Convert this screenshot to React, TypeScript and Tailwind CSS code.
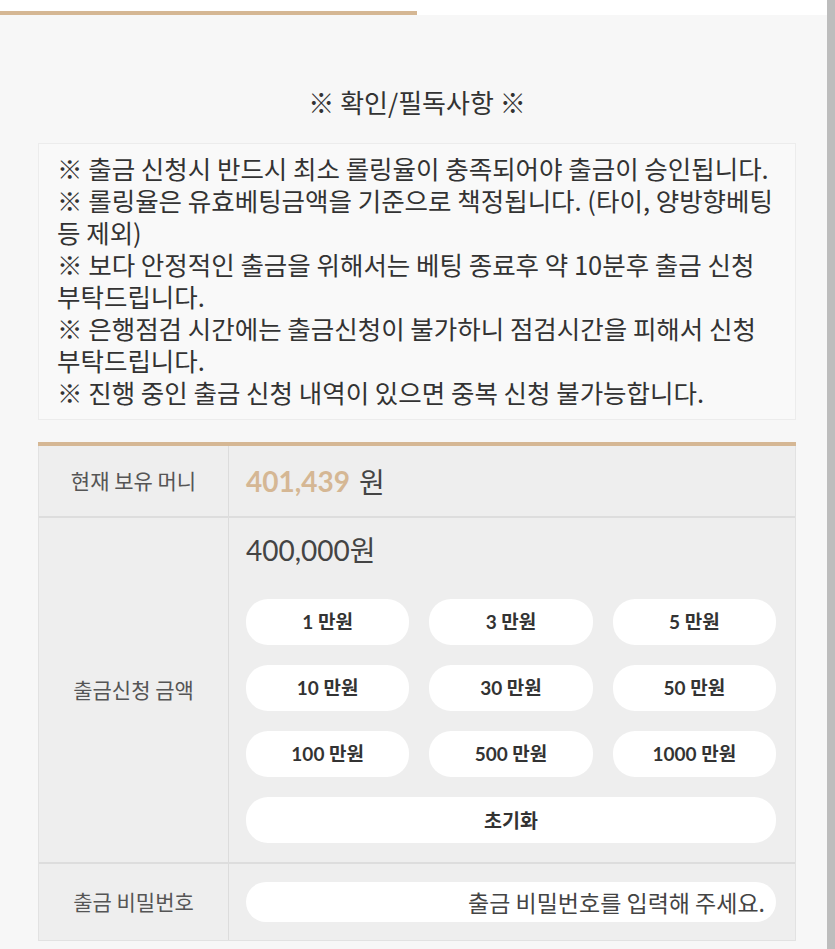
const notices = [
  "※ 출금 신청시 반드시 최소 롤링율이 충족되어야 출금이 승인됩니다.",
  "※ 롤링율은 유효베팅금액을 기준으로 책정됩니다. (타이, 양방향베팅 등 제외)",
  "※ 보다 안정적인 출금을 위해서는 베팅 종료후 약 10분후 출금 신청 부탁드립니다.",
  "※ 은행점검 시간에는 출금신청이 불가하니 점검시간을 피해서 신청 부탁드립니다.",
  "※ 진행 중인 출금 신청 내역이 있으면 중복 신청 불가능합니다.",
];

const amounts = [
  "1 만원",
  "3 만원",
  "5 만원",
  "10 만원",
  "30 만원",
  "50 만원",
  "100 만원",
  "500 만원",
  "1000 만원",
];

const kr = "font-['Noto_Sans_CJK_KR',sans-serif]";
const latoKr = "font-['Lato','Noto_Sans_CJK_KR',sans-serif]";

export default function App() {
  return (
    <div className={`flex min-h-[949px] w-[835px] ${kr}`}>
      <div className="flex flex-1 flex-col bg-[#f7f7f7]">
        {/* Top tab indicator */}
        <div className="h-[15px] bg-white pt-[11px]">
          <div className="h-[4px] w-[417px] bg-[#d5b794]" />
        </div>

        <div className="flex flex-col pl-[38px] pr-[31px]">
          <h2 className="mt-[71px] text-center text-[26px] leading-[32px] font-normal text-[#333]">
            ※ 확인/필독사항 ※
          </h2>

          {/* Notice box */}
          <div className="mt-[25px] border border-[#ececec] bg-[#f9f9f9] px-[18px] pt-[8px] pb-[11px] text-[25.5px] leading-[32px] break-keep text-[#333]">
            {notices.map((n) => (
              <p key={n}>{n}</p>
            ))}
          </div>

          {/* Withdraw table */}
          <div className="mt-[22px] border-t-[4px] border-[#d5b794] bg-[#eeeeee]">
            <div className="border-x border-b border-[#e2e2e2]">
              {/* Balance */}
              <div className="flex h-[72px] border-b-2 border-[#dddddd]">
                <div className="flex w-[190px] items-center justify-center border-r border-[#dcdcdc] text-[21px] text-[#555]">
                  현재 보유 머니
                </div>
                <div className="flex flex-1 items-center pl-[17px] text-[28px]">
                  <span className={`${latoKr} font-bold text-[#d5b794]`}>401,439</span>
                  <span className="ml-[9px] text-[#444]">원</span>
                </div>
              </div>

              {/* Amount */}
              <div className="flex border-b-2 border-[#dddddd]">
                <div className="flex w-[190px] items-center justify-center border-r border-[#dcdcdc] text-[21px] text-[#555]">
                  출금신청 금액
                </div>
                <div className="flex-1 pt-[16px] pr-[19px] pb-[19px] pl-[17px]">
                  <div className={`${latoKr} text-[28px] leading-[32px] text-[#444]`}>400,000원</div>
                  <div className="mt-[33px] grid grid-cols-3 gap-x-[20px] gap-y-[20px]">
                    {amounts.map((a) => (
                      <button
                        key={a}
                        className={`${latoKr} h-[46px] rounded-[22px] bg-white text-[19px] font-bold text-[#333]`}
                      >
                        {a}
                      </button>
                    ))}
                    <button className="col-span-3 h-[46px] rounded-[22px] bg-white text-[19.5px] font-bold text-[#333]">
                      초기화
                    </button>
                  </div>
                </div>
              </div>

              {/* Password */}
              <div className="flex h-[76px]">
                <div className="flex w-[190px] items-center justify-center border-r border-[#dcdcdc] text-[21px] text-[#555]">
                  출금 비밀번호
                </div>
                <div className="flex flex-1 items-center pr-[19px] pl-[17px]">
                  <input
                    type="password"
                    placeholder="출금 비밀번호를 입력해 주세요."
                    className="h-[40px] w-full rounded-[20px] bg-white pr-[11px] text-right text-[23px] text-[#444] outline-none placeholder:text-[#444]"
                  />
                </div>
              </div>
            </div>
          </div>
        </div>
      </div>

      {/* Scrollbar */}
      <div className="w-[8px] bg-[#bdbdbd]" />
    </div>
  );
}
